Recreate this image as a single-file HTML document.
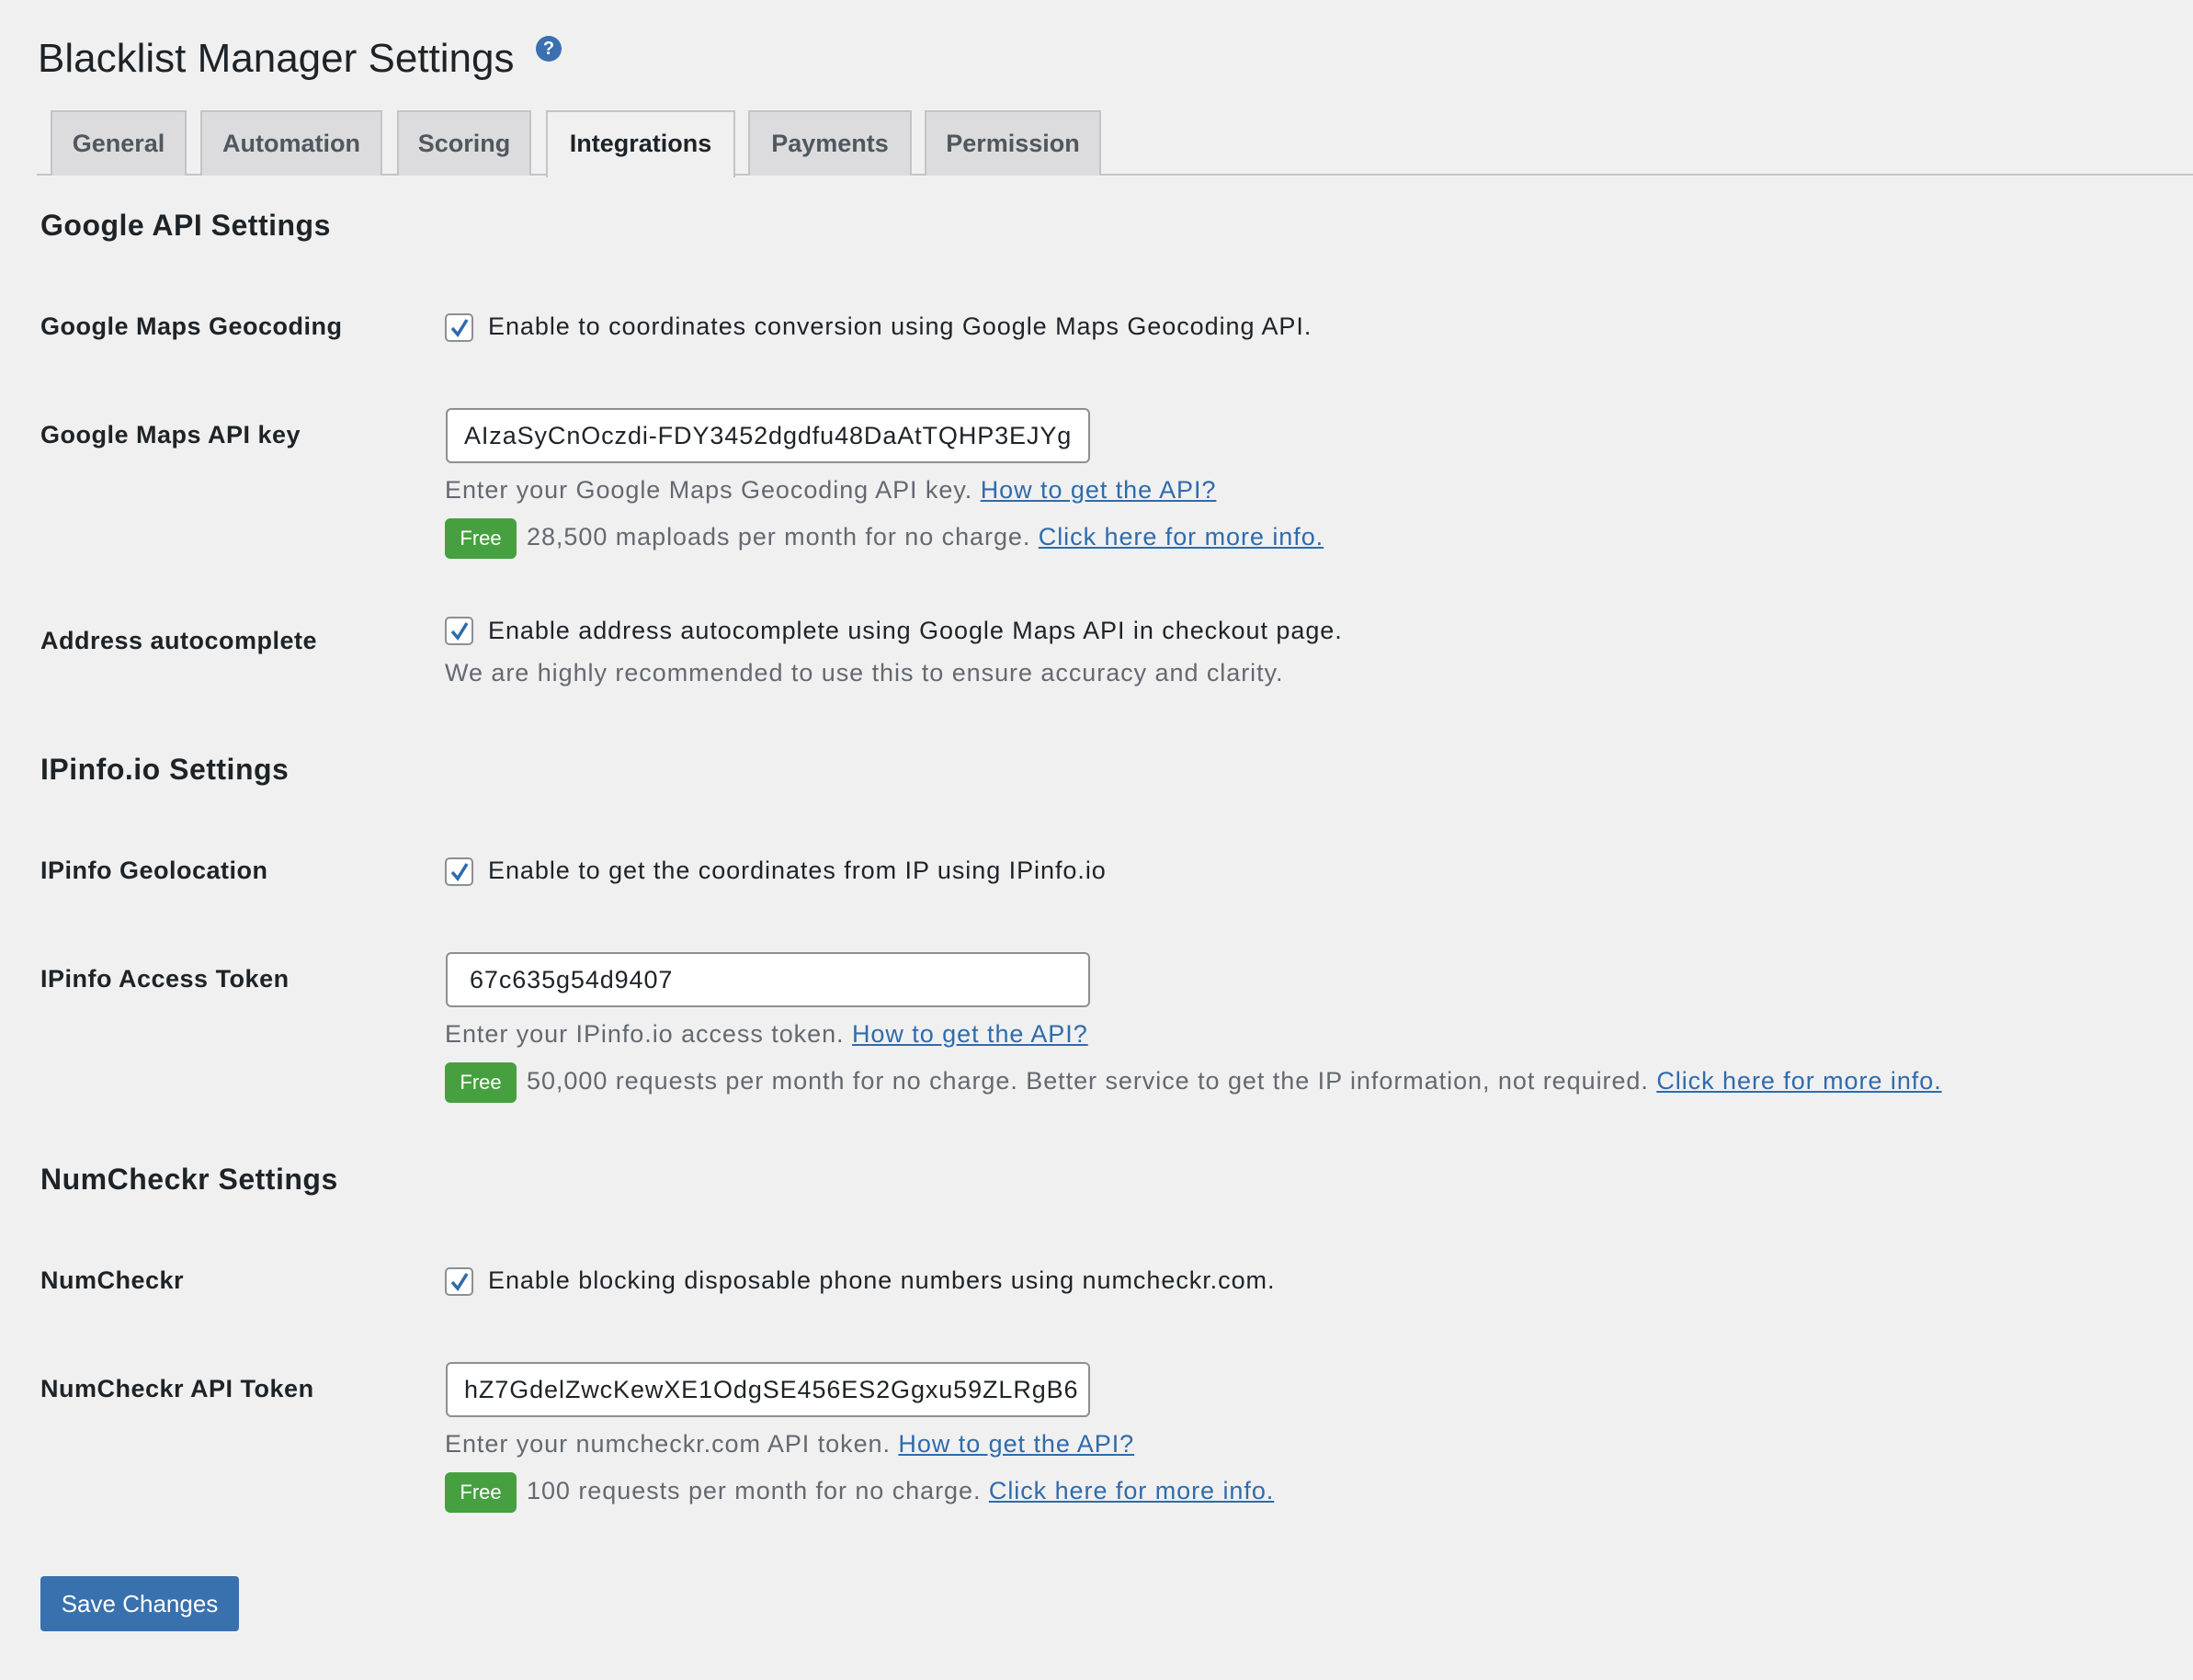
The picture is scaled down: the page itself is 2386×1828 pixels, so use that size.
<!DOCTYPE html>
<html><head><meta charset="utf-8"><style>
*{box-sizing:border-box;margin:0;padding:0}
body{width:2386px;height:1828px;background:#f0f0f1;font-family:"Liberation Sans",sans-serif;color:#1d2327;position:relative;overflow:hidden}
.a{position:absolute;white-space:nowrap;line-height:40px}
.h1{font-size:44px;left:41px;top:38px;line-height:52px}
.help{position:absolute;left:583px;top:39px;width:28px;height:28px;border-radius:50%;background:#3a70b0;color:#fff;font-size:20px;font-weight:bold;text-align:center;line-height:28px}
.tab{position:absolute;top:120px;height:71px;background:#dcdcde;border:2px solid #c3c4c7;border-bottom:none;font-size:27px;font-weight:bold;color:#50575e;text-align:center;line-height:68px}
.tab.act{background:#f0f0f1;color:#1d2327;height:73px;z-index:2}
.line{position:absolute;left:40px;right:0;top:189px;height:2px;background:#c3c4c7}
.sec{font-size:32px;font-weight:bold;left:44px;letter-spacing:0.5px}
.lbl{font-size:27px;font-weight:bold;left:44px;letter-spacing:0.5px}
.txt{font-size:27px;left:531px;letter-spacing:0.95px}
.desc{font-size:27px;left:484px;color:#646970;letter-spacing:0.95px}
a{color:#2f6bab;text-decoration:underline}
.cb{position:absolute;left:484px;width:31px;height:31px;border:2px solid #8c8f94;border-radius:5px;background:#fff}
.cb svg{position:absolute;left:3px;top:2px}
.inp{position:absolute;left:485px;width:701px;height:60px;border:2px solid #8c8f94;border-radius:6px;background:#fff;font-size:27px;line-height:56px;padding-left:18px;white-space:nowrap;letter-spacing:0.9px}
.free{display:inline-block;background:#46a040;color:#fff;border-radius:6px;width:78px;height:44px;line-height:44px;text-align:center;font-size:22px;margin-right:11px;vertical-align:middle;letter-spacing:0}
.btn{position:absolute;left:44px;top:1715px;width:216px;height:60px;background:#3871ae;border-radius:4px;color:#fff;font-size:26px;text-align:center;line-height:60px}
</style></head><body>
<div class="a h1">Blacklist Manager Settings</div>
<div class="help">?</div>
<div class="line"></div>
<div class="tab" style="left:55px;width:148px">General</div>
<div class="tab" style="left:218px;width:198px">Automation</div>
<div class="tab" style="left:432px;width:146px">Scoring</div>
<div class="tab act" style="left:594px;width:206px">Integrations</div>
<div class="tab" style="left:814px;width:178px">Payments</div>
<div class="tab" style="left:1006px;width:192px">Permission</div>

<div class="a sec" style="top:225px">Google API Settings</div>
<div class="a lbl" style="top:335px">Google Maps Geocoding</div>
<div class="cb" style="top:341px"><svg width="22" height="24" viewBox="0 0 22 24"><path d="M3 12 L9 19 L19 3" fill="none" stroke="#2f6bab" stroke-width="3.5"/></svg></div>
<div class="a txt" style="top:335px">Enable to coordinates conversion using Google Maps Geocoding API.</div>

<div class="a lbl" style="top:453px">Google Maps API key</div>
<div class="inp" style="top:444px">AIzaSyCnOczdi-FDY3452dgdfu48DaAtTQHP3EJYg</div>
<div class="a desc" style="top:513px">Enter your Google Maps Geocoding API key. <a>How to get the API?</a></div>
<div class="a desc" style="top:564px"><span class="free">Free</span>28,500 maploads per month for no charge. <a>Click here for more info.</a></div>

<div class="a lbl" style="top:677px">Address autocomplete</div>
<div class="cb" style="top:671px"><svg width="22" height="24" viewBox="0 0 22 24"><path d="M3 12 L9 19 L19 3" fill="none" stroke="#2f6bab" stroke-width="3.5"/></svg></div>
<div class="a txt" style="top:666px">Enable address autocomplete using Google Maps API in checkout page.</div>
<div class="a desc" style="top:712px">We are highly recommended to use this to ensure accuracy and clarity.</div>

<div class="a sec" style="top:817px">IPinfo.io Settings</div>
<div class="a lbl" style="top:927px">IPinfo Geolocation</div>
<div class="cb" style="top:933px"><svg width="22" height="24" viewBox="0 0 22 24"><path d="M3 12 L9 19 L19 3" fill="none" stroke="#2f6bab" stroke-width="3.5"/></svg></div>
<div class="a txt" style="top:927px">Enable to get the coordinates from IP using IPinfo.io</div>

<div class="a lbl" style="top:1045px">IPinfo Access Token</div>
<div class="inp" style="top:1036px;padding-left:24px">67c635g54d9407</div>
<div class="a desc" style="top:1105px">Enter your IPinfo.io access token. <a>How to get the API?</a></div>
<div class="a desc" style="top:1156px"><span class="free">Free</span>50,000 requests per month for no charge. Better service to get the IP information, not required. <a>Click here for more info.</a></div>

<div class="a sec" style="top:1263px">NumCheckr Settings</div>
<div class="a lbl" style="top:1373px">NumCheckr</div>
<div class="cb" style="top:1379px"><svg width="22" height="24" viewBox="0 0 22 24"><path d="M3 12 L9 19 L19 3" fill="none" stroke="#2f6bab" stroke-width="3.5"/></svg></div>
<div class="a txt" style="top:1373px">Enable blocking disposable phone numbers using numcheckr.com.</div>

<div class="a lbl" style="top:1491px">NumCheckr API Token</div>
<div class="inp" style="top:1482px">hZ7GdelZwcKewXE1OdgSE456ES2Ggxu59ZLRgB6</div>
<div class="a desc" style="top:1551px">Enter your numcheckr.com API token. <a>How to get the API?</a></div>
<div class="a desc" style="top:1602px"><span class="free">Free</span>100 requests per month for no charge. <a>Click here for more info.</a></div>

<div class="btn">Save Changes</div>
</body></html>
